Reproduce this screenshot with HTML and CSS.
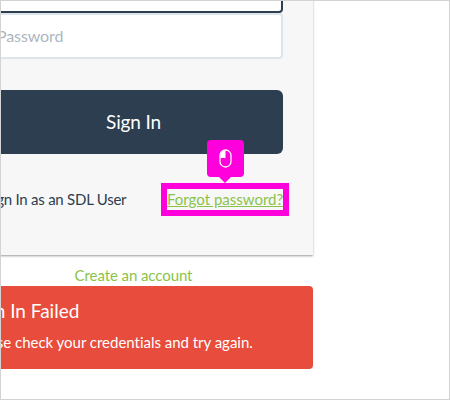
FILE: index.html
```
<!DOCTYPE html>
<html lang="en">
<head>
  <meta charset="UTF-8" />
  <meta name="viewport" content="width=device-width, initial-scale=1.0"/>
  <title>Sign In</title>
  <link rel="stylesheet" href="styles.css">
</head>
<body>
  <div class="container">
    <form class="card">
      <input type="text" class="field active" aria-label="Username">
      <input type="password" class="field" placeholder="Password">
      <button type="button" class="sign-in-btn">Sign In</button>
      <div class="links">
        <span class="sdl-user">Sign In as an SDL User</span>
        <div class="highlight">
          <a class="forgot">Forgot password?</a>
          <div class="click-tip">
            <svg width="13" height="19" viewBox="0 0 13 19">
              <path d="M1.5 9V6.5a5 5 0 0 1 5-5V9z" fill="#fff"/>
              <rect x="1" y="1" width="11" height="17" rx="5.5" fill="none" stroke="#fff" stroke-width="1.3"/>
            </svg>
          </div>
        </div>
      </div>
    </form>
    <a class="create">Create an account</a>
    <div class="alert">
      <h2>Sign In Failed</h2>
      <p>Please check your credentials and try again.</p>
    </div>
  </div>
</body>
</html>
```
FILE: styles.css
```
* {
  box-sizing: border-box;
}

body {
  margin: 0;
  height: 400px;
  overflow: hidden;
  border: 1px solid #d3d3d3;
  background-color: #fff;
  font-family: Lato, sans-serif;
  font-size: 15px;
  color: #2c3e50;
}

.container {
  width: 360px;
  margin: -35px 0 0 -48px;
}

.card {
  width: 361px;
  height: 289px;
  padding: 0 30px;
  background-color: #f7f7f7;
  border-right: 1px solid #e4e4e4;
  box-shadow: 0 2px 2px -1px rgba(0,0,0,0.4);
}

.field {
  display: block;
  width: 300px;
  height: 46px;
  padding: 0 12px 2px;
  border: 2px solid #dce4ec;
  border-radius: 4px;
  background-color: #fff;
  font-family: Lato, sans-serif;
  font-size: 16px;
  letter-spacing: -0.1px;
  outline: none;
}

.field::placeholder {
  color: #acb6c0;
}

.active {
  height: 47px;
  border-color: #2c3e50;
}

.sign-in-btn {
  display: block;
  width: 300px;
  height: 64px;
  margin-top: 31px;
  padding: 0 0 2px 1px;
  border: none;
  border-radius: 6px;
  background-color: #2c3e50;
  color: #fff;
  font-family: Lato, sans-serif;
  font-size: 19px;
  letter-spacing: -0.15px;
}

.links {
  display: flex;
  justify-content: space-between;
  width: 306px;
  margin-top: 29px;
  line-height: 21px;
}

.sdl-user {
  padding: 6px 0 0 2px;
  letter-spacing: -0.24px;
}

.highlight {
  position: relative;
  width: 128px;
  height: 33px;
  border: 6px solid #ff00dc;
  white-space: nowrap;
}

.forgot {
  color: #8bc34a;
  text-decoration: underline;
}

.click-tip {
  position: absolute;
  left: 40px;
  top: -49px;
  width: 37px;
  height: 37px;
  display: flex;
  justify-content: center;
  align-items: center;
  border-radius: 4px;
  background-color: #ff00dc;
}

.click-tip::after {
  content: "";
  position: absolute;
  top: 37px;
  left: 12px;
  border: 6px solid transparent;
  border-top-color: #ff00dc;
  border-bottom: 0;
}

.create {
  display: block;
  height: 31px;
  padding: 10px 0 0 1px;
  text-align: center;
  line-height: 21px;
  letter-spacing: -0.08px;
  color: #8bc34a;
}

.alert {
  height: 83px;
  padding: 13px 15px;
  border-radius: 4px;
  background-color: #e74c3c;
  color: #fff;
}

.alert h2 {
  margin: 0 0 0 2px;
  font-size: 19px;
  font-weight: 400;
  line-height: 23px;
}

.alert p {
  margin: 10px 0 0 1px;
  line-height: 21px;
  letter-spacing: -0.02px;
}
```
